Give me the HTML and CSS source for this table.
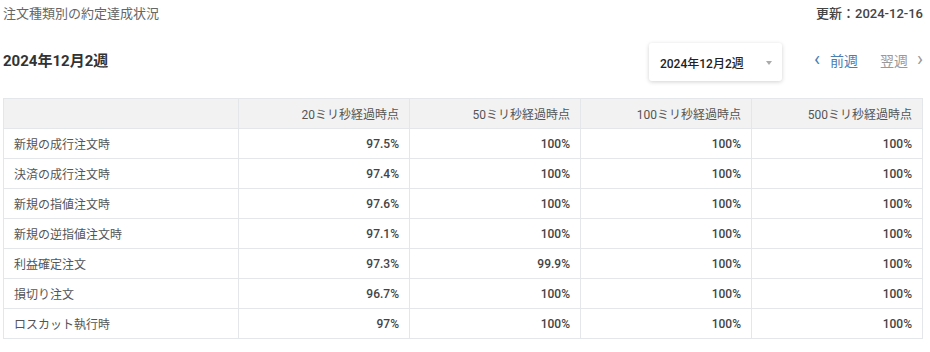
FILE: index.html
```html
<!DOCTYPE html>
<html lang="ja">
<head>
<meta charset="utf-8">
<link rel="stylesheet" href="styles.css">
</head>
<body>
<div class="page">
  <div class="top">
    <div class="title">注文種類別の約定達成状況</div>
    <div class="updated">更新：2024-12-16</div>
  </div>
  <div class="toolbar">
    <div class="week">2024年12月2週</div>
    <div class="controls">
      <div class="select"><span>2024年12月2週</span><span class="caret"></span></div>
      <div class="nav">
        <span class="prev"><span class="chev">‹</span>前週</span>
        <span class="next">翌週<span class="chev">›</span></span>
      </div>
    </div>
  </div>
  <table class="grid">
    <thead>
      <tr><th class="label"></th><th>20ミリ秒経過時点</th><th>50ミリ秒経過時点</th><th>100ミリ秒経過時点</th><th>500ミリ秒経過時点</th></tr>
    </thead>
    <tbody>
      <tr><td class="label">新規の成行注文時</td><td>97.5%</td><td>100%</td><td>100%</td><td>100%</td></tr>
      <tr><td class="label">決済の成行注文時</td><td>97.4%</td><td>100%</td><td>100%</td><td>100%</td></tr>
      <tr><td class="label">新規の指値注文時</td><td>97.6%</td><td>100%</td><td>100%</td><td>100%</td></tr>
      <tr><td class="label">新規の逆指値注文時</td><td>97.1%</td><td>100%</td><td>100%</td><td>100%</td></tr>
      <tr><td class="label">利益確定注文</td><td>97.3%</td><td>99.9%</td><td>100%</td><td>100%</td></tr>
      <tr><td class="label">損切り注文</td><td>96.7%</td><td>100%</td><td>100%</td><td>100%</td></tr>
      <tr><td class="label">ロスカット執行時</td><td>97%</td><td>100%</td><td>100%</td><td>100%</td></tr>
    </tbody>
  </table>
</div>
</body>
</html>
```
FILE: styles.css
```css
html, body {
  margin: 0;
  padding: 0;
  background: #fff;
}
body {
  font-family: Roboto, "Noto Sans CJK JP", sans-serif;
  color: #333;
}
.page {
  width: 920px;
  padding-left: 3px;
}
.top {
  display: flex;
  justify-content: space-between;
  align-items: center;
  height: 24px;
}
.title {
  font-size: 13px;
  color: #666;
}
.updated {
  font-size: 13px;
  font-weight: 500;
  color: #444;
}
.toolbar {
  display: flex;
  justify-content: space-between;
  align-items: center;
  height: 38px;
  margin-top: 19px;
}
.week {
  font-size: 15px;
  font-weight: 700;
  color: #333;
  margin-bottom: 5px;
}
.controls {
  display: flex;
  align-items: center;
}
.select {
  box-sizing: border-box;
  width: 133px;
  height: 38px;
  display: flex;
  align-items: center;
  justify-content: space-between;
  padding: 1px 10px 0 11px;
  border-radius: 3px;
  background: #fff;
  box-shadow: 0 1px 4px rgba(0,0,0,0.18);
  font-size: 12px;
  font-weight: 500;
  color: #222;
}
.caret {
  width: 0;
  height: 0;
  border-left: 3px solid transparent;
  border-right: 3px solid transparent;
  border-top: 4px solid #aaa;
}
.nav {
  display: flex;
  align-items: center;
  margin-left: 32px;
  font-size: 14px;
  margin-bottom: 4px;
}
.prev {
  color: #4a7db2;
  display: flex;
  align-items: center;
}
.next {
  color: #999;
  margin-left: 22px;
  display: flex;
  align-items: center;
}
.chev {
  font-size: 20px;
  line-height: 1;
  margin-top: -3px;
}
.prev .chev { margin-right: 10px; }
.next .chev { margin-left: 9px; }
.grid {
  margin-top: 17px;
  width: 920px;
  border-collapse: collapse;
  table-layout: fixed;
  font-size: 12px;
}
.grid th, .grid td {
  border: 1px solid #e3e7ea;
  height: 29px;
  padding: 0 10px;
  text-align: right;
}
.grid th {
  background: #f2f2f2;
  font-weight: 400;
  color: #555;
}
.grid td {
  font-weight: 500;
  color: #444;
}
.grid .label {
  width: 214px;
  text-align: left;
  font-weight: 400;
  color: #555;
}
```
